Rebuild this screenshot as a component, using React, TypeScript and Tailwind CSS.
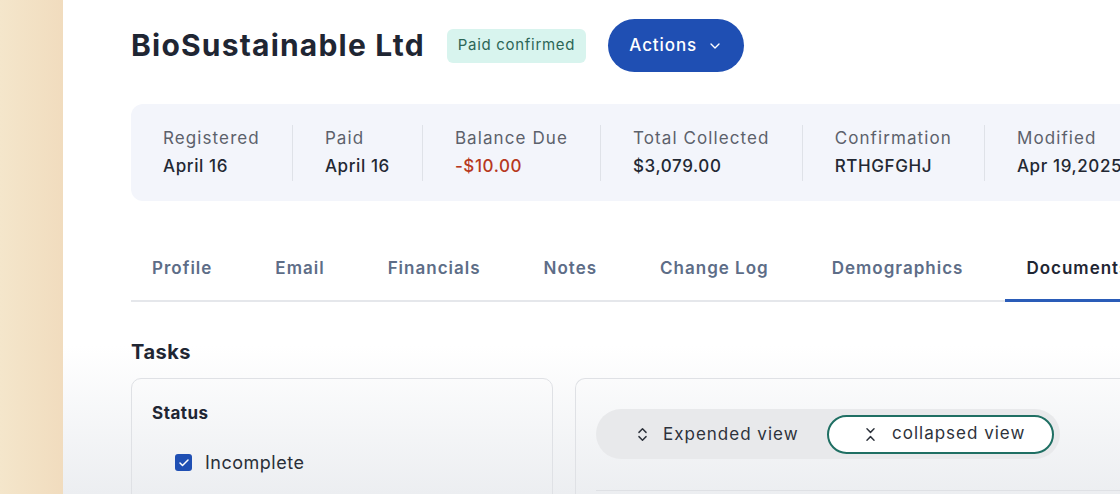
import { Check, ChevronDown, ChevronsDownUp, ChevronsUpDown } from "lucide-react";

const stats = [
  { label: "Registered", value: "April 16" },
  { label: "Paid", value: "April 16" },
  { label: "Balance Due", value: "-$10.00", red: true },
  { label: "Total Collected", value: "$3,079.00" },
  { label: "Confirmation", value: "RTHGFGHJ" },
  { label: "Modified", value: "Apr 19,2025" },
];

const tabs = ["Profile", "Email", "Financials", "Notes", "Change Log", "Demographics", "Documents"];

export default function App() {
  return (
    <div
      className="flex h-[494px] w-[1120px] overflow-hidden"
      style={{ fontFamily: 'Inter, "Open Sans", sans-serif' }}
    >
      {/* side strip */}
      <div className="w-[63px] shrink-0 bg-gradient-to-r from-[#f4e6cb] to-[#f1dcbe]" />

      {/* main */}
      <div className="flex-1 min-w-0 bg-gradient-to-b from-white via-white via-70% to-[#eceef1] pl-[68px]">
        {/* header */}
        <div className="flex items-center h-[53px] mt-[19px]">
          <h1 className="text-[30px] font-bold text-[#1f2633] tracking-[1.2px]">BioSustainable Ltd</h1>
          <span className="ml-[22px] rounded-md bg-[#d8f4ee] px-[11px] h-[34px] flex items-center text-[15px] text-[#2c6656] tracking-[0.7px]">
            Paid confirmed
          </span>
          <button className="ml-[22px] h-[53px] w-[136px] rounded-full bg-[#1f4fb3] text-white text-[17px] font-medium flex items-center justify-center gap-[10px] tracking-[0.9px]">
            Actions
            <ChevronDown size={16} strokeWidth={2} />
          </button>
        </div>

        {/* stats */}
        <div className="mt-[32px] h-[97px] rounded-l-xl bg-[#f3f5fb] flex items-center whitespace-nowrap">
          {stats.map((s, i) => (
            <div
              key={s.label}
              className={`px-[32px] h-[56px] flex flex-col justify-center ${i > 0 ? "border-l border-[#dfe2e8]" : ""}`}
            >
              <div className="text-[17px] text-[#5c616b] leading-[26px] tracking-[1.1px] -mt-[1px]">{s.label}</div>
              <div
                className={`text-[17px] font-medium leading-[26px] tracking-[0.6px] mt-[2px] ${
                  s.red ? "text-[#b7391f]" : "text-[#232833]"
                }`}
              >
                {s.value}
              </div>
            </div>
          ))}
        </div>

        {/* tabs */}
        <div className="mt-[42px] flex gap-[21px] border-b-2 border-[#e5e7eb] whitespace-nowrap h-[59px]">
          {tabs.map((t) => (
            <div
              key={t}
              className={`px-[21px] pt-[13px] text-[17px] leading-[24px] font-semibold -mb-[2px] border-b-[3px] tracking-[1px] ${
                t === "Documents" ? "text-[#1f2633] border-[#2a5cb8]" : "text-[#5d6d87] border-transparent"
              }`}
            >
              {t}
            </div>
          ))}
        </div>

        {/* tasks */}
        <h2 className="mt-[36px] text-[20px] font-bold text-[#1f2633] leading-[28px] tracking-[0.5px]">Tasks</h2>

        <div className="mt-[12px] flex gap-[22px]">
          <div className="w-[422px] h-[140px] shrink-0 rounded-[10px] border border-[#dfe1e5] pl-[20px] pt-[22px]">
            <div className="text-[17px] font-bold text-[#1f2633] leading-[24px] tracking-[0.5px]">Status</div>
            <label className="mt-[24px] ml-[23px] flex items-center gap-[13px]">
              <span className="w-[17px] h-[17px] rounded-[3px] bg-[#1f4fb3] flex items-center justify-center">
                <Check size={12} strokeWidth={3} className="text-white" />
              </span>
              <span className="text-[18px] text-[#2a2f38] tracking-[0.5px]">Incomplete</span>
            </label>
          </div>

          <div className="flex-1 h-[140px] rounded-tl-[10px] border-l border-t border-[#dfe1e5] pl-[20px] pt-[30px]">
            <div className="w-[464px] h-[50px] rounded-full bg-[#e8e9eb] flex items-center pl-[38px] pr-[6px] text-[17px] text-[#2d323b] tracking-[1px]">
              <div className="flex items-center gap-[12px] mt-[1px]">
                <ChevronsUpDown size={17} strokeWidth={2} />
                Expended view
              </div>
              <div className="ml-auto h-[39px] w-[227px] rounded-full border-2 border-[#1f6f63] bg-white flex items-center pl-[33px] gap-[13px]">
                <ChevronsDownUp size={17} strokeWidth={2} />
                collapsed view
              </div>
            </div>
            <div className="mt-[31px] border-t border-[#dfe1e5]" />
          </div>
        </div>
      </div>
    </div>
  );
}
